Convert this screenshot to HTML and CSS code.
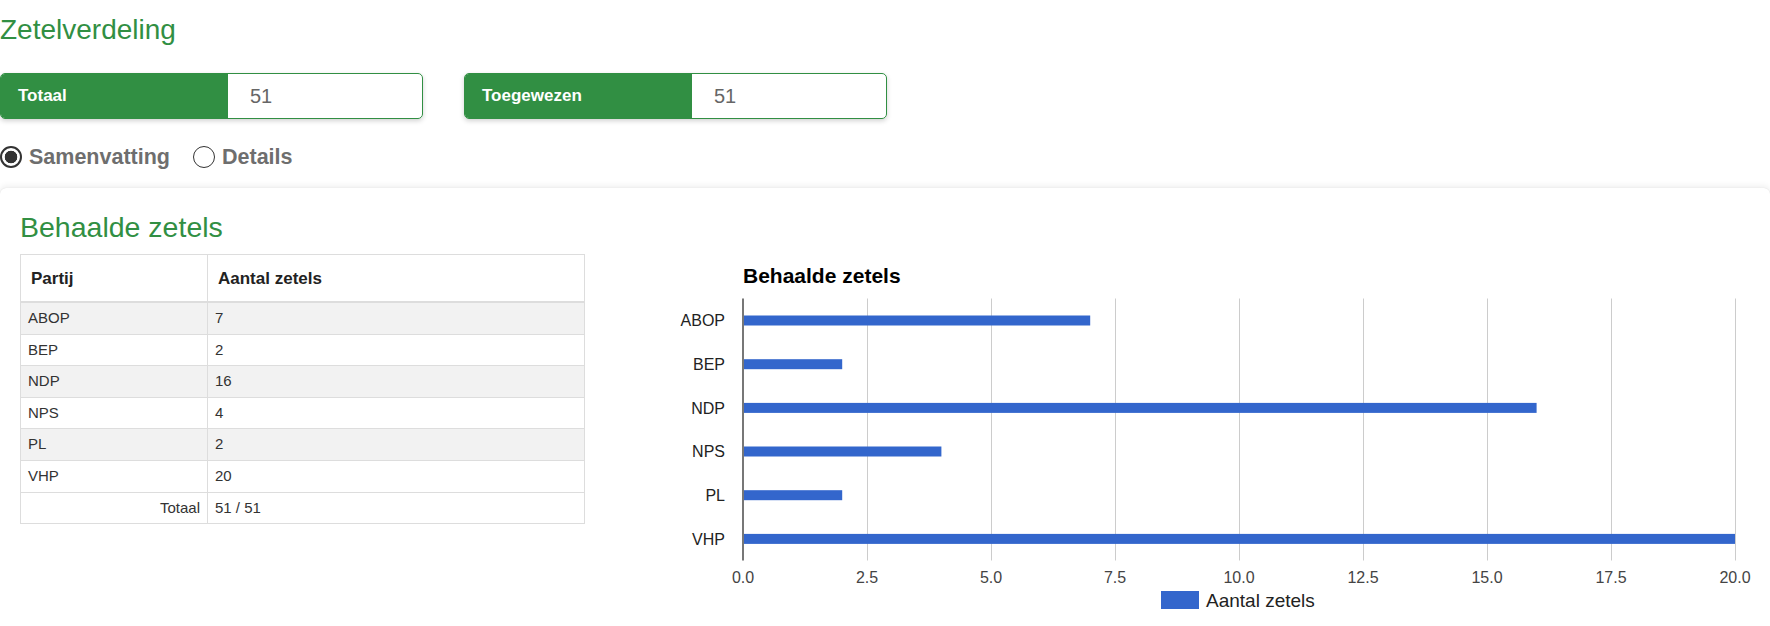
FILE: index.html
```html
<!DOCTYPE html>
<html lang="nl">

<head>
    <meta charset="UTF-8">
    <meta name="viewport" content="width=device-width, initial-scale=1.0">
    <title>Zetelverdeling</title>
    <link rel="stylesheet" href="styles.css">
</head>

<body>
    <!-- kop -->
    <h1 class="page-title">Zetelverdeling</h1>

    <!-- totalen -->
    <div class="stats">
        <div class="stat">
            <span class="stat-label">Totaal</span>
            <span class="stat-value">51</span>
        </div>
        <div class="stat">
            <span class="stat-label">Toegewezen</span>
            <span class="stat-value">51</span>
        </div>
    </div>

    <!-- weergave keuze -->
    <div class="view-switch">
        <label class="radio"><input type="radio" name="view" checked> Samenvatting</label>
        <label class="radio"><input type="radio" name="view"> Details</label>
    </div>

    <!-- resultaat kaart -->
    <div class="card">
        <h2 class="card-title">Behaalde zetels</h2>
        <div class="card-body">
            <table class="seats">
                <thead>
                    <tr>
                        <th class="col-party">Partij</th>
                        <th>Aantal zetels</th>
                    </tr>
                </thead>
                <tbody>
                    <tr><td>ABOP</td><td>7</td></tr>
                    <tr><td>BEP</td><td>2</td></tr>
                    <tr><td>NDP</td><td>16</td></tr>
                    <tr><td>NPS</td><td>4</td></tr>
                    <tr><td>PL</td><td>2</td></tr>
                    <tr><td>VHP</td><td>20</td></tr>
                </tbody>
                <tfoot>
                    <tr><td class="total-label">Totaal</td><td>51 / 51</td></tr>
                </tfoot>
            </table>

            <!-- staafdiagram -->
            <svg class="chart" width="1170" height="380" viewBox="0 0 1170 380">
                <text class="chart-title" x="143" y="29">Behaalde zetels</text>

                <!-- rasterlijnen -->
                <g class="grid">
                    <line x1="267.5" y1="44.5" x2="267.5" y2="306.5"/>
                    <line x1="391.5" y1="44.5" x2="391.5" y2="306.5"/>
                    <line x1="515.5" y1="44.5" x2="515.5" y2="306.5"/>
                    <line x1="639.5" y1="44.5" x2="639.5" y2="306.5"/>
                    <line x1="763.5" y1="44.5" x2="763.5" y2="306.5"/>
                    <line x1="887.5" y1="44.5" x2="887.5" y2="306.5"/>
                    <line x1="1011.5" y1="44.5" x2="1011.5" y2="306.5"/>
                    <line x1="1135.5" y1="44.5" x2="1135.5" y2="306.5"/>
                </g>

                <!-- staven: 49.6px per zetel -->
                <g class="bars">
                    <rect x="143" y="61.5" width="347.2" height="10"/>
                    <rect x="143" y="105.2" width="99.2" height="10"/>
                    <rect x="143" y="148.9" width="793.6" height="10"/>
                    <rect x="143" y="192.5" width="198.4" height="10"/>
                    <rect x="143" y="236.2" width="99.2" height="10"/>
                    <rect x="143" y="279.9" width="992" height="10"/>
                </g>

                <rect class="axis" x="142" y="44.5" width="2" height="262"/>

                <!-- partijen -->
                <g class="cat">
                    <text x="125" y="72.3">ABOP</text>
                    <text x="125" y="116">BEP</text>
                    <text x="125" y="159.7">NDP</text>
                    <text x="125" y="203.3">NPS</text>
                    <text x="125" y="247">PL</text>
                    <text x="125" y="290.7">VHP</text>
                </g>

                <!-- as waarden -->
                <g class="tick">
                    <text x="143" y="328.5">0.0</text>
                    <text x="267" y="328.5">2.5</text>
                    <text x="391" y="328.5">5.0</text>
                    <text x="515" y="328.5">7.5</text>
                    <text x="639" y="328.5">10.0</text>
                    <text x="763" y="328.5">12.5</text>
                    <text x="887" y="328.5">15.0</text>
                    <text x="1011" y="328.5">17.5</text>
                    <text x="1135" y="328.5">20.0</text>
                </g>

                <!-- legenda -->
                <rect class="legend-key" x="561" y="337" width="38" height="18"/>
                <text class="legend" x="606" y="353">Aantal zetels</text>
            </svg>
        </div>
    </div>
</body>

</html>
```

FILE: styles.css
```css
html,
body {
    margin: 0;
    padding: 0;
}

body {
    font-family: "Liberation Sans", Arial, sans-serif;
    color: #333;
    background: #fff;
}

/* paginatitel */
.page-title {
    margin: 14px 0 0;
    font-size: 28px;
    line-height: 32px;
    font-weight: normal;
    color: #318f43;
}

/* totalen */
.stats {
    display: flex;
    gap: 41px;
    margin-top: 27px;
}

.stat {
    display: flex;
    width: 423px;
    height: 46px;
    box-sizing: border-box;
    border: 1px solid #318f43;
    border-radius: 5px;
    overflow: hidden;
    box-shadow: 0 2px 5px rgba(0, 0, 0, .18);
}

.stat-label {
    display: flex;
    align-items: center;
    width: 227px;
    padding-left: 17px;
    box-sizing: border-box;
    background: #318f43;
    color: #fff;
    font-size: 17px;
    font-weight: bold;
}

.stat-value {
    display: flex;
    align-items: center;
    padding-left: 22px;
    font-size: 20px;
    color: #666;
}

/* samenvatting / details */
.view-switch {
    display: flex;
    align-items: center;
    gap: 23px;
    height: 22px;
    margin-top: 27px;
}

.radio {
    display: flex;
    align-items: center;
    gap: 7px;
    font-size: 21.5px;
    font-weight: bold;
    color: #6e6e6e;
}

.radio input {
    appearance: none;
    -webkit-appearance: none;
    margin: 0;
    width: 22px;
    height: 22px;
    box-sizing: border-box;
    border: 1.5px solid #333;
    border-radius: 50%;
    background: #fff;
}

.radio input:checked {
    border-width: 2px;
    background: radial-gradient(circle, #333 6px, #fff 6.6px);
}

/* kaart */
.card {
    margin-top: 20px;
    padding: 23px 0 0 20px;
    min-height: 460px;
    background: #fff;
    border-radius: 6px;
    box-shadow: 0 -2px 6px rgba(0, 0, 0, .07), 0 0 1px rgba(0, 0, 0, .15);
}

.card-title {
    margin: 0;
    font-size: 28.5px;
    line-height: 32px;
    font-weight: normal;
    color: #318f43;
}

.card-body {
    display: flex;
    align-items: flex-start;
    gap: 15px;
    margin-top: 11px;
}

/* tabel */
.seats {
    width: 565px;
    flex-shrink: 0;
    border-collapse: collapse;
    font-size: 15px;
}

.seats th,
.seats td {
    border: 1px solid #ddd;
    text-align: left;
}

.seats th {
    padding: 14px 10px 13px;
    line-height: 19px;
    font-size: 17px;
    color: #222;
    border-bottom-width: 2px;
}

.seats .col-party {
    width: 166px;
}

.seats td {
    padding: 7px;
    line-height: 16.6px;
    color: #333;
}

.seats tbody tr:nth-child(odd) {
    background: #f2f2f2;
}

.seats .total-label {
    text-align: right;
}

/* diagram */
.chart {
    display: block;
    flex-shrink: 0;
}

.chart text {
    font-family: "Liberation Sans", Arial, sans-serif;
}

.chart-title {
    font-size: 21px;
    font-weight: bold;
    fill: #000;
}

.grid line {
    stroke: #ccc;
    stroke-width: 1;
}

.bars rect,
.legend-key {
    fill: #3366cc;
}

.axis {
    fill: #777;
}

.cat text {
    font-size: 16px;
    fill: #222;
    text-anchor: end;
}

.tick text {
    font-size: 16px;
    fill: #444;
    text-anchor: middle;
}

.legend {
    font-size: 19px;
    fill: #222;
}
```
